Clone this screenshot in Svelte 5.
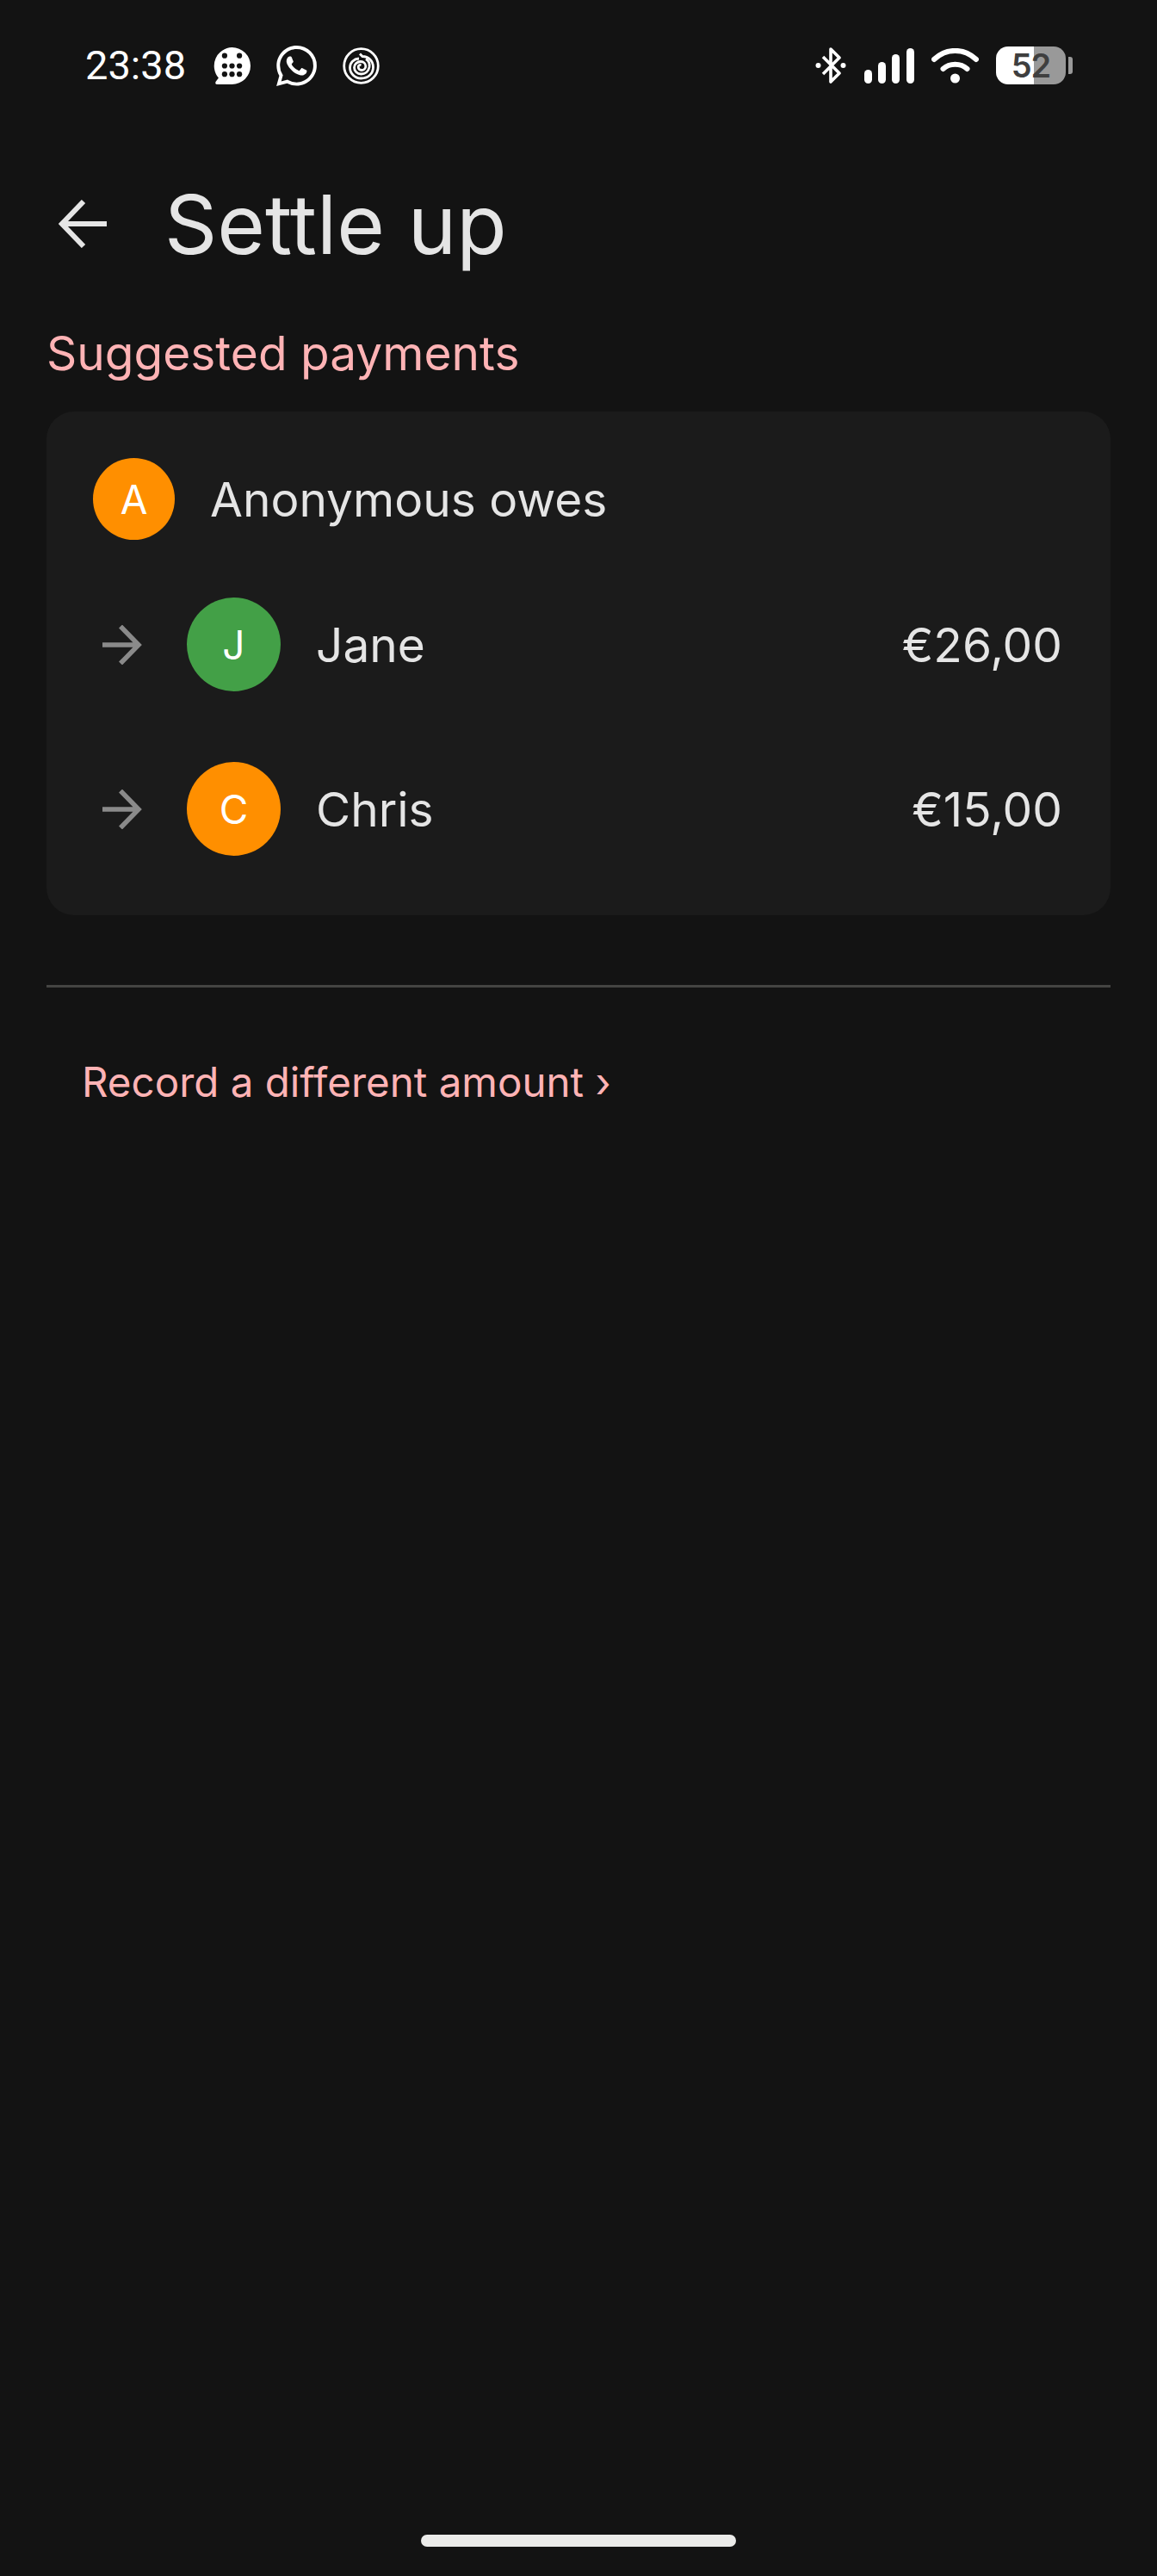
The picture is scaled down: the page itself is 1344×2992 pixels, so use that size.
<script>
  const payments = [
    { initial: "J", name: "Jane", amount: "€26,00", color: "#43a047" },
    { initial: "C", name: "Chris", amount: "€15,00", color: "#ff8f00" },
  ];
  const dots = [
    [12, 9], [28, 9],
    [12, 20], [20, 20], [28, 20],
    [12, 29], [20, 29], [28, 29],
  ];
</script>

<main class="page">
  <div class="statusBar">
    <span class="time">23:38</span>
    <svg class="icon bubble" viewBox="0 0 40 40" aria-hidden="true">
      <path d="M20 0a20 20 0 0 1 0 40H4.500Q1 40 2.500 37L5.500 33A20 20 0 0 1 20 0z" fill="#fff" />
      {#each dots as [cx, cy]}
        <circle {cx} {cy} r="2.900" fill="#131313" />
      {/each}
    </svg>
    <svg class="icon whatsapp" viewBox="0 0 24 24" aria-hidden="true">
      <path fill="#fff" d="M17.472 14.382c-.297-.149-1.758-.867-2.03-.967-.273-.099-.471-.148-.67.15-.197.297-.767.966-.94 1.164-.173.199-.347.223-.644.075-.297-.15-1.255-.463-2.39-1.475-.883-.788-1.48-1.761-1.653-2.059-.173-.297-.018-.458.13-.606.134-.133.298-.347.446-.52.149-.174.198-.298.298-.497.099-.198.05-.371-.025-.52-.075-.149-.669-1.612-.916-2.207-.242-.579-.487-.5-.669-.51-.173-.008-.371-.01-.57-.01-.198 0-.52.074-.792.372-.272.297-1.04 1.016-1.04 2.479 0 1.462 1.065 2.875 1.213 3.074.149.198 2.096 3.2 5.077 4.487.709.306 1.262.489 1.694.625.712.227 1.36.195 1.871.118.571-.085 1.758-.719 2.006-1.413.248-.694.248-1.289.173-1.413-.074-.124-.272-.198-.57-.347m-5.421 7.403h-.004a9.87 9.87 0 01-5.031-1.378l-.361-.214-3.741.982.998-3.648-.235-.374a9.86 9.86 0 01-1.51-5.26c.001-5.45 4.436-9.884 9.888-9.884 2.64 0 5.122 1.03 6.988 2.898a9.825 9.825 0 012.893 6.994c-.003 5.45-4.437 9.884-9.885 9.884m8.413-18.297A11.815 11.815 0 0012.05 0C5.495 0 .16 5.335.157 11.892c0 2.096.547 4.142 1.588 5.945L.057 24l6.305-1.654a11.882 11.882 0 005.683 1.448h.005c6.554 0 11.89-5.335 11.893-11.893a11.821 11.821 0 00-3.48-8.413z" />
    </svg>
    <svg class="icon spiral" viewBox="0 0 43 43" fill="none" stroke="#fff" stroke-width="2.800" aria-hidden="true">
      <circle cx="21.500" cy="21.500" r="19.800" />
      <path d="M20 7.500L23 10.500C30 10.500 35.500 15.500 35.500 23C35.500 31 29 36 21.500 36C14 36 8.500 30 8.500 23.500C8.500 17.500 13 13.500 19 13" />
      <path d="M27 13.500C31 16 31.500 20 31 23C30 28 26 31 21.500 31C17 31 13.500 27.500 13.500 23.500C13.500 19.500 17 16.500 21 16.500C24.500 16.500 26.800 19 26.800 22C26.800 24.800 24.500 26.500 22 26.500C19.800 26.500 18.200 24.800 18.200 23C18.200 21.200 19.700 20.200 21.500 20.500" />
    </svg>
    <span class="spacer"></span>
    <svg class="icon bluetooth" viewBox="0 0 36 42" fill="none" stroke="#fff" stroke-width="3.600" aria-hidden="true">
      <path d="M9 11L28 30L18 40V2L28 12L9 31" stroke-linejoin="round" />
      <circle cx="3.500" cy="21" r="3" fill="#fff" stroke="none" />
      <circle cx="32.500" cy="21" r="3" fill="#fff" stroke="none" />
    </svg>
    <svg class="icon signal" viewBox="0 0 58 41" fill="#fff" aria-hidden="true">
      <rect x="0" y="25" width="9" height="16" rx="4.500" />
      <rect x="16" y="16" width="9" height="25" rx="4.500" />
      <rect x="32" y="7" width="9" height="34" rx="4.500" />
      <rect x="49" y="0" width="9" height="41" rx="4.500" />
    </svg>
    <svg class="icon wifi" viewBox="0 0 55 41" fill="none" stroke="#fff" stroke-width="6" stroke-linecap="round" aria-hidden="true">
      <path d="M3 13C17 -0.500 38 -0.500 52 13" />
      <path d="M13.500 24C21 17 34 17 41.500 24" />
      <circle cx="27.500" cy="35" r="5.500" fill="#fff" stroke="none" />
    </svg>
    <div class="battery">
      <div class="batteryBody"><span>52</span></div>
      <div class="batteryNub"></div>
    </div>
  </div>

  <header class="topBar">
    <svg class="backArrow" viewBox="0 0 56 56" fill="none" stroke="#e5e5e5" stroke-width="6" aria-hidden="true">
      <path d="M56 28H4M29 2L4 28L29 54" />
    </svg>
    <h1>Settle up</h1>
  </header>

  <h2 class="sectionTitle">Suggested payments</h2>

  <section class="card">
    <div class="debtor">
      <div class="avatar small" style="background: #ff8f00">A</div>
      <span>Anonymous owes</span>
    </div>
    {#each payments as payment}
      <div class="payment">
        <svg class="rowArrow" viewBox="0 0 46 46" fill="none" stroke="#8a8a8a" stroke-width="5.500" aria-hidden="true">
          <path d="M0 23H42M21 1.500L42 23L21 44.500" />
        </svg>
        <div class="avatar" style="background: {payment.color}">{payment.initial}</div>
        <span class="name">{payment.name}</span>
        <span class="amount">{payment.amount}</span>
      </div>
    {/each}
  </section>

  <hr class="divider" />

  <div class="recordLink">Record a different amount ›</div>

  <div class="homeBar"></div>
</main>

<style>
  :global(body) {
    margin: 0;
    background: #131313;
  }

  .page {
    display: flex;
    flex-direction: column;
    box-sizing: border-box;
    height: 2992px;
    padding-bottom: 34px;
    background: #131313;
    color: #e5e5e5;
    font-family: Inter, "Liberation Sans", sans-serif;
    overflow: hidden;
  }

  .statusBar {
    display: flex;
    align-items: center;
    height: 48px;
    margin-top: 52px;
    padding: 0 98px 0 99px;
    color: #fff;
  }

  .time {
    width: 149px;
    font-family: Roboto, "Liberation Sans", sans-serif;
    font-size: 47px;
    line-height: 48px;
  }

  .icon {
    display: block;
    flex: none;
  }

  .bubble {
    width: 43px;
    height: 43px;
  }

  .whatsapp {
    width: 47px;
    height: 47px;
    margin-left: 30px;
  }

  .spiral {
    width: 43px;
    height: 43px;
    margin-left: 30px;
  }

  .spacer {
    flex: 1;
  }

  .bluetooth {
    width: 36px;
    height: 42px;
  }

  .signal {
    width: 58px;
    height: 41px;
    margin-left: 21px;
  }

  .wifi {
    width: 55px;
    height: 41px;
    margin-left: 20px;
  }

  .battery {
    display: flex;
    align-items: center;
    gap: 3px;
    margin-left: 20px;
  }

  .batteryBody {
    width: 81px;
    height: 44px;
    border-radius: 14px;
    background: linear-gradient(to right, #fff 44px, #999 44px);
    color: #3f3f3f;
    font-size: 38px;
    font-weight: 600;
    letter-spacing: -1px;
    line-height: 44px;
    text-align: center;
  }

  .batteryNub {
    width: 5px;
    height: 20px;
    border-radius: 0 3px 3px 0;
    background: #999;
  }

  .topBar {
    display: flex;
    align-items: center;
    height: 100px;
    margin-top: 110px;
    padding-left: 68px;
  }

  .backArrow {
    width: 56px;
    height: 56px;
    flex: none;
  }

  h1 {
    margin: 0 0 0 67px;
    font-size: 95.500px;
    font-weight: 400;
    line-height: 100px;
  }

  .sectionTitle {
    margin: 68px 0 0 54px;
    color: #ffb3b5;
    font-size: 55px;
    font-weight: 400;
    line-height: 64px;
  }

  .card {
    box-sizing: border-box;
    height: 585px;
    margin: 36px 54px 0 54px;
    padding: 54px 56px 0 54px;
    border-radius: 32px;
    background: #1b1b1b;
  }

  .debtor {
    display: flex;
    align-items: center;
    height: 95px;
    gap: 41px;
    font-size: 55px;
  }

  .payment {
    display: flex;
    align-items: center;
    height: 191px;
    font-size: 55px;
  }

  .debtor + .payment {
    margin-top: 26px;
  }

  .rowArrow {
    width: 46px;
    height: 46px;
    flex: none;
    margin-left: 11px;
  }

  .avatar {
    display: flex;
    align-items: center;
    justify-content: center;
    flex: none;
    width: 109px;
    height: 109px;
    margin-left: 52px;
    border-radius: 50%;
    color: #fff;
    font-size: 46px;
  }

  .avatar.small {
    width: 95px;
    height: 95px;
    margin-left: 0;
  }

  .name {
    margin-left: 41px;
  }

  .amount {
    margin-left: auto;
  }

  .divider {
    height: 3px;
    margin: 81px 54px 0;
    border: none;
    background: #444442;
  }

  .recordLink {
    margin: 80px 0 0 95px;
    color: #ffb3b5;
    font-size: 47.500px;
    line-height: 60px;
  }

  .homeBar {
    align-self: center;
    width: 366px;
    height: 14px;
    margin-top: auto;
    border-radius: 7px;
    background: #ebebe9;
  }
</style>
